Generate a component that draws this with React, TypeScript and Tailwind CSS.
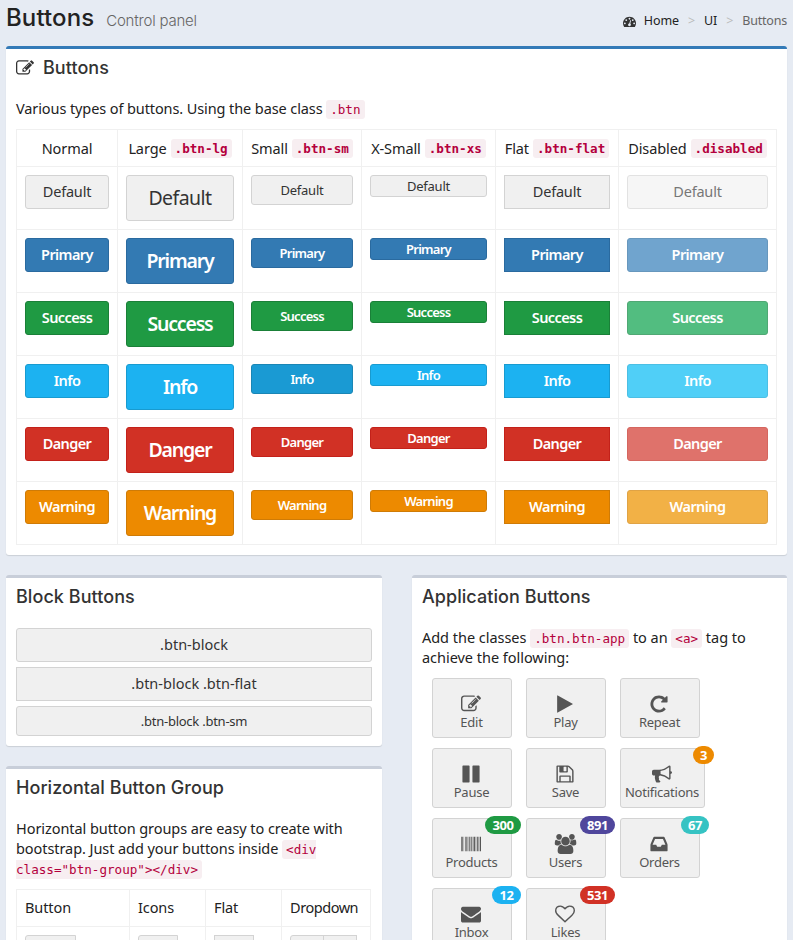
import type { ReactNode } from "react";

const ICONS = {
  edit: "M888 1184l116-116-152-152-116 116v56h96v96h56zm440-720q-16-16-33 1l-350 350q-17 17-1 33t33-1l350-350q17-17 1-33zm80 594v190q0 119-84.5 203.5t-203.5 84.5h-832q-119 0-203.5-84.5t-84.5-203.5v-832q0-119 84.5-203.5t203.5-84.5h832q63 0 117 25 15 7 18 23 3 17-9 29l-49 49q-14 14-32 8-23-6-45-6h-832q-66 0-113 47t-47 113v832q0 66 47 113t113 47h832q66 0 113-47t47-113v-126q0-13 9-22l64-64q15-15 35-7t20 29zm-96-738l288 288-672 672h-288v-288zm444 132l-92 92-288-288 92-92q28-28 68-28t68 28l152 152q28 28 28 68t-28 68z",
  dashboard: "M384 1152q0-53-37.5-90.5t-90.5-37.5-90.5 37.5-37.5 90.5 37.5 90.5 90.5 37.5 90.5-37.5 37.5-90.5zm192-448q0-53-37.5-90.5t-90.5-37.5-90.5 37.5-37.5 90.5 37.5 90.5 90.5 37.5 90.5-37.5 37.5-90.5zm428 481l101-382q6-26-7.5-48.5t-38.5-29.5-48 6.5-30 39.5l-101 382q-60 5-107 43.5t-63 98.5q-20 77 20 146t117 89 146-20 89-117q16-60-6-117t-72-91zm660-33q0-53-37.5-90.5t-90.5-37.5-90.5 37.5-37.5 90.5 37.5 90.5 90.5 37.5 90.5-37.5 37.5-90.5zm-640-640q0-53-37.5-90.5t-90.5-37.5-90.5 37.5-37.5 90.5 37.5 90.5 90.5 37.5 90.5-37.5 37.5-90.5zm448 192q0-53-37.5-90.5t-90.5-37.5-90.5 37.5-37.5 90.5 37.5 90.5 90.5 37.5 90.5-37.5 37.5-90.5zm320 448q0 261-141 483-19 29-54 29h-1402q-35 0-54-29-141-221-141-483 0-182 71-348t191-286 286-191 348-71 348 71 286 191 191 286 71 348z",
  play: "M1576 927l-1328 738q-23 13-39.5 3t-16.5-36v-1472q0-26 16.5-36t39.5 3l1328 738q23 13 23 31t-23 31z",
  repeat: "M1664 256v448q0 26-19 45t-45 19h-448q-42 0-59-40-17-39 14-69l138-138q-148-137-349-137-104 0-198.5 40.5t-163.5 109.5-109.5 163.5-40.5 198.5 40.5 198.5 109.5 163.5 163.5 109.5 198.5 40.5q119 0 225-52t179-147q7-10 23-12 15 0 25 9l137 138q9 8 9.5 20.5t-7.5 22.5q-109 132-264 204.5t-327 72.5q-156 0-298-61t-245-164-164-245-61-298 61-298 164-245 245-164 298-61q147 0 284.5 55.5t244.5 156.5l130-129q29-31 70-14 39 17 39 59z",
  pause: "M1664 192v1408q0 26-19 45t-45 19h-512q-26 0-45-19t-19-45v-1408q0-26 19-45t45-19h512q26 0 45 19t19 45zm-896 0v1408q0 26-19 45t-45 19h-512q-26 0-45-19t-19-45v-1408q0-26 19-45t45-19h512q26 0 45 19t19 45z",
  save: "M512 1536h768v-384h-768v384zm896 0h128v-896q0-14-10-38.5t-20-34.5l-281-281q-10-10-34-20t-39-10v416q0 40-28 68t-68 28h-576q-40 0-68-28t-28-68v-416h-128v1280h128v-416q0-40 28-68t68-28h832q40 0 68 28t28 68v416zm-384-928v-320q0-13-9.5-22.5t-22.5-9.5h-192q-13 0-22.5 9.5t-9.5 22.5v320q0 13 9.5 22.5t22.5 9.5h192q13 0 22.5-9.5t9.5-22.5zm640 32v928q0 40-28 68t-68 28h-1344q-40 0-68-28t-28-68v-1344q0-40 28-68t68-28h928q40 0 88 20t76 48l280 280q28 28 48 76t20 88z",
  bullhorn: "M1664 640q53 0 90.5 37.5t37.5 90.5-37.5 90.5-90.5 37.5v384q0 52-38 90t-90 38q-417-347-812-380-58 19-91 66t-31 100.5 40 92.5q-20 33-23 65.5t6 58 33.5 55 48 50 61.5 50.5q-29 58-111.5 83t-168.5 11.5-132-55.5q-7-23-29.5-87.5t-32-94.5-23-89-15-101 3.5-98.5 22-110.5h-122q-66 0-113-47t-47-113v-192q0-66 47-113t113-47h480q435 0 896-384 52 0 90 38t38 90v384zm-128 604v-954q-394 302-768 343v270q377 42 768 341z",
  barcode: "M0 256h64v1280H0zM96 256h64v1280H96zM224 256h28v1280h-28zM352 256h64v1280h-64zM480 256h96v1280h-96zM640 256h28v1280h-28zM736 256h64v1280h-64zM864 256h96v1280h-96zM1024 256h28v1280h-28zM1120 256h128v1280h-128zM1310 256h32v1280h-32zM1410 256h96v1280h-96zM1570 256h64v1280h-64zM1696 256h96v1280h-96z",
  users: "M657 896q-162 5-265 128h-134q-82 0-138-40.5t-56-118.5q0-353 124-353 6 0 43.5 21t97.5 42.5 119 21.5q67 0 133-23-5 37-5 66 0 159 90 283zm1071 637q0 120-73 189.5t-194 69.5h-874q-121 0-194-69.5t-73-189.5q0-53 3.5-103.5t14-109 26.5-108.5 43-97.5 62-81 85.5-53.5 111.5-20q10 0 43 21.5t73 48 107 48 135 21.5 135-21.5 107-48 73-48 43-21.5q61 0 111.5 20t85.5 53.5 62 81 43 97.5 26.5 108.5 14 109 3.5 103.5zm-1024-1277q0 106-75 181t-181 75-181-75-75-181 75-181 181-75 181 75 75 181zm704 384q0 159-112.5 271.5t-271.5 112.5-271.5-112.5-112.5-271.5 112.5-271.5 271.5-112.5 271.5 112.5 112.5 271.5zm576 225q0 78-56 118.5t-138 40.5h-134q-103-123-265-128 90-124 90-283 0-29-5-66 66 23 133 23 59 0 119-21.5t97.5-42.5 43.5-21q124 0 124 353zm-128-609q0 106-75 181t-181 75-181-75-75-181 75-181 181-75 181 75 75 181z",
  inbox: "M1151 960h316q-1-3-2.5-8.5t-2.5-7.5l-212-496h-708l-212 496q-1 3-2.5 8.5t-2.5 7.5h316l95 192h320zm513 30v482q0 26-19 45t-45 19h-1408q-26 0-45-19t-19-45v-482q0-62 25-123l238-552q10-25 36.5-42t52.5-17h832q26 0 52.5 17t36.5 42l238 552q25 61 25 123z",
  envelope: "M1792 710v794q0 66-47 113t-113 47h-1472q-66 0-113-47t-47-113v-794q44 49 101 87 362 246 497 345 57 42 92.5 65.5t94.5 48 110 24.5h2q51 0 110-24.5t94.5-48 92.5-65.5q170-123 498-345 57-39 100-87zm0-294q0 79-49 151t-122 123q-376 261-468 325-10 7-42.5 31t-54 38.5-52 32.5-57.5 27-50 9h-2q-23 0-50-9t-57.5-27-52-32.5-54-38.5-42.5-31q-91-64-262-182.5t-205-142.5q-62-42-117-115.5t-55-136.5q0-78 41.5-130t118.5-52h1472q65 0 112.5 47t47.5 113z",
  heart: "M1664 596q0-81-21.5-143t-55-98.5-81.5-59.5-94-31-98-8-112 25.5-110.5 64-86.5 72-60 61.5q-18 22-49 22t-49-22q-24-28-60-61.5t-86.5-72-110.5-64-112-25.5-98 8-94 31-81.5 59.5-55 98.5-21.5 143q0 168 187 355l581 560 580-559q188-188 188-356zm128 0q0 221-229 450l-623 600q-18 18-44 18t-44-18l-624-602q-10-8-27.5-26t-55.5-65.5-68-97.5-53.5-121-23.5-138q0-220 127-344t351-124q62 0 126.5 21.5t120 58 95.5 68.5 76 68q36-36 76-68t95.5-68.5 120-58 126.5-21.5q224 0 351 124t127 344z",
};

type IconName = keyof typeof ICONS;

function Icon({ name, className }: { name: IconName; className: string }) {
  return (
    <svg viewBox={name === "users" ? "0 0 2048 1792" : "0 0 1792 1792"} className={className} fill="currentColor">
      <path d={ICONS[name]} />
    </svg>
  );
}

function Code({ children, className = "" }: { children: ReactNode; className?: string }) {
  return (
    <code className={`rounded-[3px] bg-[#f7eef1] px-1 py-[2px] font-['DejaVu_Sans_Mono',monospace] text-[12.6px] leading-[15px] tracking-normal text-[#b4003c] ${className}`}>
      {children}
    </code>
  );
}

function Box({ title, icon, primary, className = "", children }: { title: string; icon?: boolean; primary?: boolean; className?: string; children: ReactNode }) {
  return (
    <section className={`rounded-[3px] border-t-[3px] bg-white px-[10px] shadow-[0_1px_1px_rgba(0,0,0,0.12)] ${primary ? "border-[#337ab7]" : "border-[#c8ced9]"} ${className}`}>
      <h2 className="flex h-[40px] items-center pb-[2px] font-['Inter',sans-serif] text-[18px] font-medium leading-[18px] tracking-[0.05px] text-[#333]">
        {icon && <Icon name="edit" className="mr-[9px] h-[18px] w-[18px]" />}
        {title}
      </h2>
      {children}
    </section>
  );
}

const COLUMNS = [
  { label: "Normal", code: "", size: "h-[34px] rounded-[3px] text-[14.5px] pb-[2px]", plain: "tracking-[-0.2px]", bold: "tracking-[-0.6px]", disabled: false },
  { label: "Large", code: ".btn-lg", size: "h-[46px] rounded-[3px] text-[19.5px]", plain: "tracking-[-0.55px]", bold: "tracking-[-1.2px]", disabled: false },
  { label: "Small", code: ".btn-sm", size: "h-[30px] rounded-[3px] text-[13px] pb-px", plain: "tracking-[-0.25px]", bold: "tracking-[-0.75px]", disabled: false },
  { label: "X-Small", code: ".btn-xs", size: "h-[22px] rounded-[3px] text-[13px] pb-px", plain: "tracking-[-0.25px]", bold: "tracking-[-0.75px]", disabled: false },
  { label: "Flat", code: ".btn-flat", size: "h-[34px] text-[14.5px] pb-[2px]", plain: "tracking-[-0.2px]", bold: "tracking-[-0.6px]", disabled: false },
  { label: "Disabled", code: ".disabled", size: "h-[34px] rounded-[3px] text-[14.5px] pb-[2px]", plain: "tracking-[-0.2px]", bold: "tracking-[-0.6px]", disabled: true },
];

const ROWS = [
  { label: "Default", on: "border-[#d3d3d3] bg-[#f0f0f0] text-[#333]", off: "border-[#e2e2e2] bg-[#f6f6f6] text-[#777]" },
  { label: "Primary", on: "border-[#2a6a9f] bg-[#337ab3] font-semibold text-white", off: "border-[#6797bd] bg-[#70a4ce] font-semibold text-white" },
  { label: "Success", on: "border-[#1a8038] bg-[#1f9a43] font-semibold text-white", off: "border-[#50a874] bg-[#52bd80] font-semibold text-white" },
  { label: "Info", on: "border-[#189bd0] bg-[#1cb2f1] font-semibold text-white", off: "border-[#4cbfe4] bg-[#50cff7] font-semibold text-white" },
  { label: "Danger", on: "border-[#c3211a] bg-[#d13125] font-semibold text-white", off: "border-[#d5665f] bg-[#df726b] font-semibold text-white" },
  { label: "Warning", on: "border-[#cf7b06] bg-[#ed8a00] font-semibold text-white", off: "border-[#e0a345] bg-[#f2b146] font-semibold text-white" },
];

const APPS: { label: string; icon: IconName; badge?: string; tone?: string }[] = [
  { label: "Edit", icon: "edit" },
  { label: "Play", icon: "play" },
  { label: "Repeat", icon: "repeat" },
  { label: "Pause", icon: "pause" },
  { label: "Save", icon: "save" },
  { label: "Notifications", icon: "bullhorn", badge: "3", tone: "bg-[#ed8a00] w-[21px]" },
  { label: "Products", icon: "barcode", badge: "300", tone: "bg-[#1f9a43] w-[36px]" },
  { label: "Users", icon: "users", badge: "891", tone: "bg-[#4f469c] w-[35px]" },
  { label: "Orders", icon: "inbox", badge: "67", tone: "bg-[#36c3c3] w-[28px]" },
  { label: "Inbox", icon: "envelope", badge: "12", tone: "bg-[#1cb2f1] w-[29px]" },
  { label: "Likes", icon: "heart", badge: "531", tone: "bg-[#d13125] w-[35px]" },
];

const DEFAULT_BTN = "border border-[#d3d3d3] bg-[#f0f0f0] text-[#333]";

export default function App() {
  return (
    <div className="h-[940px] w-[793px] overflow-hidden bg-[#e6ebf3] px-[6px] font-['Noto_Sans',sans-serif] text-[14.5px] leading-5 tracking-[-0.1px] text-[#222]">
      <header className="flex h-[46px] justify-between">
        <h1 className="flex items-baseline pt-[5px] font-['Inter',sans-serif] text-[24px] font-medium leading-[26px] tracking-[0.1px] text-[#222]">
          Buttons
          <small className="ml-[12px] text-[15px] font-light tracking-[-0.2px] text-[#666]">Control panel</small>
        </h1>
        <nav className="flex h-[42px] items-center text-[12.5px] tracking-[-0.1px] text-[#222]">
          <Icon name="dashboard" className="mr-[8px] h-[13px] w-[13px] text-[#333]" />
          <span>Home</span>
          <span className="mx-[9px] text-[#bbb]">&gt;</span>
          <span>UI</span>
          <span className="mx-[9px] text-[#bbb]">&gt;</span>
          <span className="tracking-[-0.2px] text-[#666]">Buttons</span>
        </nav>
      </header>

      <Box title="Buttons" icon primary className="h-[509px]">
        <p className="mt-[9px]">
          Various types of buttons. Using the base class <Code>.btn</Code>
        </p>
        <div className="mt-[11px] grid w-[761px] grid-cols-[101px_125px_119px_134px_123px_158px] border-l border-t border-[#f0f0f0]">
          {COLUMNS.map((c) => (
            <div key={c.label} className="flex h-[37px] items-center justify-center gap-[4px] whitespace-nowrap border-b border-r border-[#f0f0f0]">
              <span className="-mt-px">{c.label}</span>
              {c.code && <Code className="font-bold">{c.code}</Code>}
            </div>
          ))}
          {ROWS.map((r) =>
            COLUMNS.map((c) => (
              <div key={r.label + c.label} className="h-[63px] border-b border-r border-[#f0f0f0] p-2">
                <button
                  className={`flex w-full items-center justify-center border ${c.size} ${r.label === "Default" ? c.plain : c.bold} ${c.disabled ? r.off : r.on} ${r.label === "Info" && c.label === "Small" ? "border-[#1a86b5]! bg-[#1a9ad3]!" : ""}`}
                >
                  {r.label}
                </button>
              </div>
            )),
          )}
        </div>
      </Box>

      <div className="mt-5 flex items-start gap-[30px]">
        <div className="w-[376px]">
          <Box title="Block Buttons" className="h-[171px]">
            <div className="mt-[10px] flex flex-col gap-[5px]">
              <button className={`h-[34px] rounded-[3px] pb-[2px] tracking-normal ${DEFAULT_BTN}`}>.btn-block</button>
              <button className={`h-[34px] pb-[2px] tracking-normal ${DEFAULT_BTN}`}>.btn-block .btn-flat</button>
              <button className={`h-[30px] rounded-[3px] pb-px text-[13px] tracking-[-0.25px] ${DEFAULT_BTN}`}>.btn-block .btn-sm</button>
            </div>
          </Box>
          <Box title="Horizontal Button Group" className="mt-5 h-[220px]">
            <p className="mt-[9px] tracking-[-0.07px]">
              Horizontal button groups are easy to create with
              <br />
              bootstrap. Just add your buttons inside{" "}
              <Code>
                &lt;div
                <br />
                class="btn-group"&gt;&lt;/div&gt;
              </Code>
            </p>
            <div className="mt-[11px] grid w-[355px] grid-cols-[113px_76px_76px_89px] border-l border-t border-[#f0f0f0]">
              {["Button", "Icons", "Flat", "Dropdown"].map((t) => (
                <div key={t} className={`flex h-[37px] items-center border-b border-r border-[#f0f0f0] px-2 pb-[2px] ${t === "Dropdown" ? "tracking-[-0.45px]" : "tracking-[-0.1px]"}`}>
                  {t}
                </div>
              ))}
              <div className="h-[63px] border-r border-[#f0f0f0] p-2">
                <div className={`h-[34px] w-[51px] rounded-l-[3px] ${DEFAULT_BTN}`} />
              </div>
              <div className="h-[63px] border-r border-[#f0f0f0] p-2">
                <div className={`h-[34px] w-[40px] rounded-l-[3px] ${DEFAULT_BTN}`} />
              </div>
              <div className="h-[63px] border-r border-[#f0f0f0] p-2">
                <div className={`h-[34px] w-[40px] ${DEFAULT_BTN}`} />
              </div>
              <div className="flex h-[63px] border-r border-[#f0f0f0] p-2">
                <div className={`h-[34px] w-[34px] rounded-l-[3px] ${DEFAULT_BTN}`} />
                <div className={`-ml-px h-[34px] w-[34px] ${DEFAULT_BTN}`} />
              </div>
            </div>
          </Box>
        </div>

        <Box title="Application Buttons" className="h-[400px] w-[375px]">
          <p className="mt-[9px] tracking-[-0.03px]">
            Add the classes <Code>.btn.btn-app</Code> to an <Code>&lt;a&gt;</Code> tag to
            <br />
            achieve the following:
          </p>
          <div className="ml-[10px] mt-[11px] grid grid-cols-[80px_80px_85px] gap-x-[14px] gap-y-[10px]">
            {APPS.map((a) => (
              <button
                key={a.label}
                className={`relative flex h-[60px] flex-col items-center rounded-[3px] border border-[#d3d3d3] bg-[#f0f0f0] pr-px pt-[15px] text-[13px] tracking-[-0.25px] text-[#555] ${a.label === "Notifications" ? "w-[85px]" : "w-[80px]"}`}
              >
                <Icon name={a.icon} className={a.icon === "users" ? "mr-px h-[20px] w-[23px]" : "mr-px h-[20px] w-[20px]"} />
                <span className="mt-[-1px] leading-[18px]">{a.label}</span>
                {a.badge && (
                  <span className={`absolute right-[-10px] top-[-3px] flex h-[18px] items-center justify-center rounded-full text-[13px] font-bold tracking-[-0.4px] text-white ${a.tone}`}>
                    {a.badge}
                  </span>
                )}
              </button>
            ))}
          </div>
        </Box>
      </div>
    </div>
  );
}
